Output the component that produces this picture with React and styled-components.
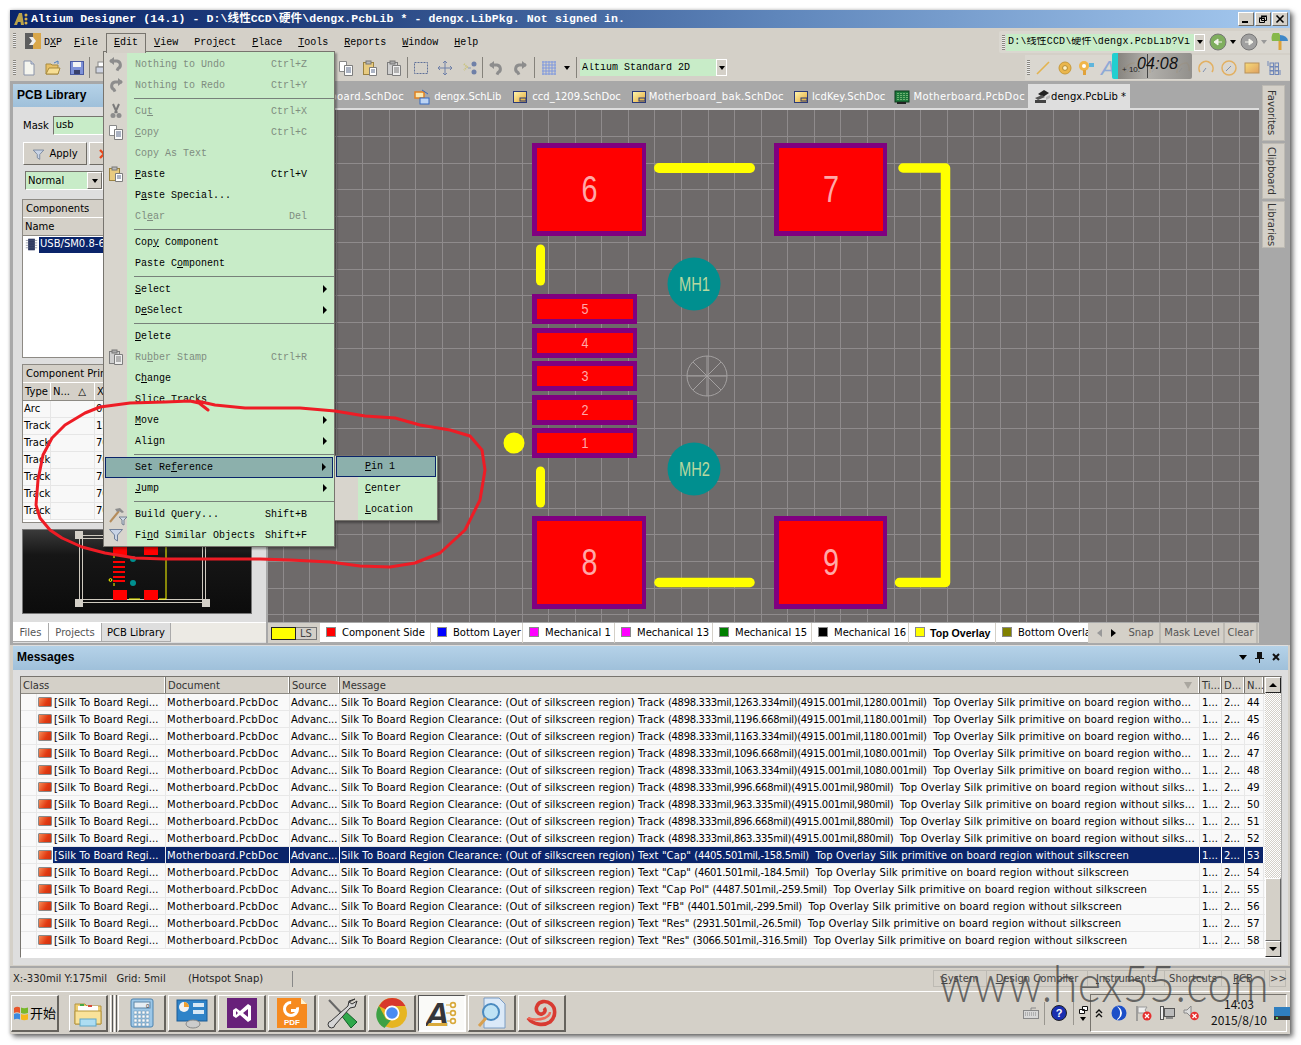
import React from 'react';
import styled, { createGlobalStyle, css } from 'styled-components';

const ui = '"DejaVu Sans", Tahoma, sans-serif';
const mono = '"Liberation Mono", "Noto Sans CJK SC", monospace';
const headFont = '"Liberation Sans", Tahoma, sans-serif';

const Global = createGlobalStyle`
  html, body { margin: 0; padding: 0; background: #fff; }
  * { box-sizing: border-box; }
`;

const raised = css`
  border-style: solid; border-width: 1px;
  border-color: #fff #6f6c66 #6f6c66 #fff;
`;
const sunken = css`
  border-style: solid; border-width: 1px;
  border-color: #77746e #fff #fff #77746e;
`;

const Window = styled.div`
  position: relative; width: 1280px; height: 1024px; margin: 10px;
  display: flex; flex-direction: column; background: #d4d0c8;
  box-shadow: 3px 3px 5px rgba(0,0,0,.55), 0 0 3px rgba(0,0,0,.25);
  font: 10px/1.2 ${ui}; color: #000; overflow: visible;
`;
const TitleBar = styled.div`
  height: 18px; flex: none; display: flex; align-items: center; padding: 0 2px 0 3px;
  background: linear-gradient(90deg, #0a246a 0%, #24427f 25%, #5f86bb 60%, #a6caf0 100%);
`;
const TitleText = styled.div`
  flex: 1; margin-left: 1px; color: #fff; font: bold 11.5px/18px ${mono}; white-space: pre; letter-spacing: .12px;
`;
const WinBtn = styled.div`
  width: 16px; height: 14px; margin-left: 1px; background: #d4d0c8; ${raised};
  display: flex; align-items: center; justify-content: center;
`;
const MenuRow = styled.div`
  height: 24px; flex: none; display: flex; align-items: center; padding-left: 3px;
`;
const Grip = styled.div`
  width: 3px; height: ${p => p.$h || 15}px; flex: none; margin-right: ${p => p.$mr ?? 1}px;
  background: repeating-linear-gradient(#8a8780 0 1px, #ececec 1px 2px);
`;
const MenuItem = styled.div`
  font: 10px/19px ${mono}; padding: 0 ${p => p.$pr ?? 8}px 0 ${p => p.$pl ?? 8}px; height: 19px; margin-top: 5px;
  white-space: pre; position: relative;
  ${p => p.$open && css`
    border: 1px solid #77746e; border-bottom: 0; padding: 0 7px; line-height: 18px; z-index: 6; height: 20px; background: #d4d0c8;
  `}
`;
const DxpMark = styled.div`margin-left: 3px; display: flex; margin-top: 1px;`;
const MenuSpacer = styled.div`flex: 1;`;
const RightBar = styled.div`
  display: flex; align-items: center; height: 22px; width: 291px; padding-left: 3px; background: #dad7d0; border-radius: 2px 0 0 2px; margin-top: 4px;
`;
const Combo = styled.div`
  display: flex; align-items: center; height: ${p => p.$h || 17}px; width: ${p => p.$w}px; flex: none;
  background: #c8ecc8; font: 10px/1 ${mono}; padding-left: 2px; white-space: pre; overflow: hidden; margin-left: ${p => p.$ml || 0}px;
`;
const ComboText = styled.span`flex: 1; overflow: hidden; letter-spacing: ${p => p.$ls || 0}px;`;
const ComboBtn = styled.div`
  width: 11px; align-self: stretch; flex: none; background: #d4d0c8; border: 1px solid #fff;
  display: flex; align-items: center; justify-content: center;
`;
const Caret = styled.i`
  display: block; width: 0; height: 0; border: ${p => p.$s || 3}px solid transparent; border-top: ${p => (p.$s || 3) + 1}px solid ${p => p.$c || '#000'}; border-bottom: 0;
`;
const CaretBox = styled.div`width: ${p => p.$w || 12}px; height: 16px; flex: none; display: flex; align-items: center; justify-content: center;`;
const ToolRow = styled.div`
  height: 29px; flex: none; display: flex; align-items: center; padding: 2px 0 0 3px;
`;
const ToolBtn = styled.div`
  width: ${p => p.$w || 24}px; height: 22px; flex: none; display: flex; align-items: center; justify-content: center; margin-left: ${p => p.$ml || 0}px;
`;
const ToolSep = styled.div`
  width: 1px; height: 21px; flex: none; background: #85827b; margin: 0 ${p => p.$m ?? 1}px;
`;
const HiddenGap = styled.div`width: ${p => p.$w}px; flex: none;`;
const RightTools = styled.div`
  margin-left: auto; width: 265px; height: 25px; display: flex; align-items: center; padding-left: 2px; background: #dad7d0;
`;
const StringGlyph = styled.span`font: italic 21px/1 ${headFont}; color: #8ea9d6;`;

const Main = styled.div`
  height: 564px; flex: none; display: flex; background: #a8a8a8; padding: 3px 0 0 3px;
`;
const LeftPanel = styled.div`
  width: 253px; height: 559px; flex: none; display: flex; flex-direction: column; background: #dedede;
`;
const PanelHead = styled.div`
  height: 23px; flex: none; background: linear-gradient(#b5d2e8, #9fc0da);
  font: bold 12px/23px ${headFont}; padding-left: 4px; color: #000;
`;
const MaskRow = styled.div`
  display: flex; align-items: center; gap: 4px; margin: 9px 0 0 10px; height: 19px; padding-top: 1px;
`;
const GreenInput = styled.div`
  flex: 1; margin: -1px 13px 0 0; height: 19px; background: #c8ecc8; ${sunken}; padding: 2px 2px; font-size: 10px;
`;
const ApplyRow = styled.div`display: flex; gap: 2px; margin: 7px 0 0 10px; height: 23px;`;
const PushBtn = styled.div`
  width: ${p => p.$w}px; background: #d4d0c8; ${raised};
  display: flex; align-items: center; justify-content: center; gap: 4px; padding-top: 1px;
`;
const NormalCombo = styled.div`
  display: flex; width: 78px; height: 19px; margin: 6px 0 0 12px; background: #c8ecc8; ${sunken}; align-items: center; padding-left: 2px; justify-content: space-between;
`;
const ListBtn = styled.div`
  width: 15px; height: 17px; background: #d4d0c8; ${raised}; display: flex; align-items: center; justify-content: center;
`;
const Box = styled.div`
  margin: ${p => p.$mt}px 14px 0 9px; height: ${p => p.$h}px; background: #fff; border: 1px solid #8d8a84; flex: none; overflow: hidden;
`;
const BoxTitle = styled.div`
  height: 18px; background: #d4d0c8; padding: 3px 3px 0; border-bottom: 1px solid #fff; white-space: nowrap;
`;
const BoxHead = styled.div`
  height: 18px; display: flex; background: #d4d0c8; border-bottom: 1px solid #8d8a84; line-height: 18px;
`;
const HeadCell = styled.div`
  width: ${p => p.$w}px; flex: none; padding-left: 2px; border-right: 1px solid #fff; white-space: nowrap; overflow: hidden;
  display: flex; justify-content: space-between; padding-right: 8px;
`;
const CompRow = styled.div`display: flex; align-items: center; height: 17px; padding-left: 2px; gap: 1px;`;
const SelText = styled.div`background: #0a246a; color: #fff; padding: 1px 1px; flex: 1; white-space: nowrap; overflow: hidden; height: 16px;`;
const PrimRow = styled.div`
  display: flex; height: 17px; background: #f8f8f8; border-bottom: 1px solid #e6e6e6; line-height: 16px;
`;
const PrimCell = styled.div`width: ${p => p.$w}px; flex: none; padding-left: 1px; border-right: 1px solid #e6e6e6; white-space: nowrap;`;
const Preview = styled.div`
  margin: 6px 14px 0 9px; height: 85px; flex: none; border: 1px solid #777;
  background: linear-gradient(#3a3a3a, #161616 30%, #0c0c0c); line-height: 0;
`;
const BottomTabs = styled.div`
  margin-top: 8px; display: flex; height: 20px; flex: none; background: #eceae4; border-top: 1px solid #fff;
`;
const BottomTab = styled.div`
  width: ${p => p.$w}px; text-align: center; line-height: 20px; flex: none;
  color: ${p => p.$on ? '#000' : '#555'}; background: ${p => p.$on ? '#dedede' : '#fff'};
  border-right: 1px solid #aaa; border-bottom: 1px solid #aaa;
`;

const DocArea = styled.div`
  width: 991px; flex: none; margin-left: 2px; display: flex; flex-direction: column; height: 559px;
`;
const DocTabs = styled.div`
  height: 24px; flex: none; display: flex; align-items: stretch; padding-left: 25px; white-space: nowrap;
`;
const DocTab = styled.div`
  display: flex; align-items: center; gap: ${p => p.$gap ?? 4}px; padding: 1px ${p => p.$pr ?? 11}px 0 ${p => p.$pl ?? 0}px; font-size: 10px;
  color: ${p => p.$on ? '#000' : '#fff'}; background: ${p => p.$on ? '#dedede' : 'transparent'};
  flex: none; letter-spacing: ${p => p.$ls || 0}px;
`;
const DocStrip = styled.div`height: 2px; flex: none; background: #dedede;`;
const CanvasWrap = styled.div`height: 512px; flex: none; line-height: 0; background: #6e6a6a;`;
const LayerBar = styled.div`
  height: 21px; flex: none; margin-top: 1px; display: flex; background: #d4d0c8; padding-left: 3px; border-bottom: 1px solid #aaa;
`;
const Swatch = styled.div`
  width: 25px; height: 13px; background: #ff0; border: 1px solid #222; margin-top: 4px; flex: none;
`;
const LS = styled.div`
  width: 21px; height: 13px; margin-top: 4px; border: 1px solid #777; border-left: 0; background: #d4d0c8; flex: none; text-align: center; line-height: 12px; color: #444; margin-right: 3px;
`;
const LayerTab = styled.div`
  width: ${p => p.$w}px; flex: none; background: #fff; margin-right: 1px; display: flex; align-items: center; padding: 1px 0 0 6px; gap: ${p => p.$b ? 5 : 6}px; white-space: nowrap; overflow: hidden;
  border-bottom: 1px solid #aaa;
  ${p => p.$b && css`font: bold 10.6px/1 ${headFont};`}
`;
const LayerDot = styled.i`
  display: block; width: 10px; height: 10px; flex: none; background: ${p => p.$c}; border: 1px solid #8a8a8a; margin-top: -3px;
`;
const LayerArrows = styled.div`
  width: 34px; flex: none; display: flex; align-items: center; justify-content: space-around; padding: 0 3px; margin-right: 0;
`;
const LayerBtn = styled.div`
  width: ${p => p.$w}px; flex: none; text-align: center; line-height: 20px; color: #555; border-right: 2px solid #bdbab3;
`;
const Dock = styled.div`
  width: 28px; flex: none; display: flex; flex-direction: column; gap: 2px; padding: 1px 0 0 3px; margin-right: 0;
`;
const DockTab = styled.div`
  width: 23px; height: ${p => p.$h}px; writing-mode: vertical-rl; background: #d4d0c8; border: 1px solid #bdbab3; text-align: center; line-height: 25px; color: #333;
`;

const Messages = styled.div`
  height: 320px; flex: none; display: flex; flex-direction: column; background: #dedede; margin: 0 2px 0 3px; 
`;
const MsgHead = styled.div`
  height: 24px; flex: none; display: flex; align-items: center; padding: 0 8px 2px 4px; margin-top: 1px;
  background: linear-gradient(#b5d2e8, #9fc0da); font: bold 12px/1 ${headFont};
`;
const MsgTitle = styled.div`flex: 1;`;
const MsgIcons = styled.div`display: flex; align-items: center; gap: 8px;`;
const MsgBody = styled.div`
  display: flex; margin: 6px 6px 0 7px; height: 282px; border: 1px solid #77746e; border-right-color: #aaa; border-bottom-color: #fff; background: #fff;
`;
const MsgTable = styled.div`flex: 1; min-width: 0;`;
const cols = '16px 129px 124px 50px 860px 22px 23px 19px';
const MsgHeader = styled.div`
  display: grid; grid-template-columns: 145px 124px 50px 860px 22px 23px 19px; height: 17px; background: #d4d0c8; border-bottom: 1px solid #8d8a84; line-height: 18px;
`;
const MsgHCell = styled.div`
  padding-left: 2px; border-right: 1px solid #77746e; box-shadow: inset -1px 0 0 #fff; color: #333; white-space: nowrap; overflow: hidden; position: relative;
`;
const FilterMark = styled.i`
  position: absolute; right: 7px; top: 5px; width: 0; height: 0; border: 4px solid transparent; border-top: 7px solid #a9a69f; border-bottom: 0;
`;
const MsgRow = styled.div`
  display: grid; grid-template-columns: ${cols}; height: 17px; border-bottom: 1px solid #e8e8e8; background: #f9f9f9;
  line-height: 18px;
`;
const MsgCell = styled.div`
  padding-left: ${p => p.$pl ?? 1}px; white-space: pre; overflow: hidden; border-right: 1px solid #e8e8e8; letter-spacing: ${p => p.$ls || 0}px;
  ${p => p.$sel && css`background: #0a246a; color: #fff; border-right-color: #fff;`}
`;
const IconCell = styled.div`
  display: flex; align-items: center; padding-left: 1px; gap: 1px; white-space: pre; overflow: hidden; border-right: 1px solid #e8e8e8;
`;
const ClassText = styled.span`
  flex: 1; padding-left: 1px; line-height: 18px; height: 16px; overflow: hidden; letter-spacing: .1px;
  ${p => p.$sel && css`background: #0a246a; color: #fff;`}
`;
const Wide = styled.span`letter-spacing: .1px;`;
const Coord = styled.span`letter-spacing: -.31px;`;
const Tail = styled.span`letter-spacing: .16px;`;
const RedIcon = styled.i`
  display: block; width: 14px; height: 10px; flex: none; background: linear-gradient(120deg, #f58a55, #e23a12 60%, #cc3210); border: 1px solid #888; border-radius: 1px;
`;
const Scroll = styled.div`
  width: 16px; flex: none; display: flex; flex-direction: column;
  background: repeating-conic-gradient(#d4d0c8 0 25%, #fff 0 50%) 0 0 / 2px 2px;
`;
const ScrollBtn = styled.div`
  width: 16px; height: 16px; flex: none; background: #d4d0c8; border: 1px solid; border-color: #fff #222 #222 #fff; display: flex; align-items: center; justify-content: center;
`;
const ScrollThumb = styled.div`
  width: 16px; height: 63px; margin-top: auto; background: #d4d0c8; border: 1px solid; border-color: #fff #666 #666 #fff;
`;
const ArrowUp = styled.i`display: block; width: 0; height: 0; border: 4px solid transparent; border-bottom: 4px solid #000; border-top: 0;`;
const ArrowDown = styled.i`display: block; width: 0; height: 0; border: 4px solid transparent; border-top: 4px solid #000; border-bottom: 0;`;

const StatusBar = styled.div`
  height: 26px; flex: none; display: flex; align-items: center; padding: 0 0 2px 3px; margin-top: 1px; border-top: 2px solid #a8a8a8; white-space: pre; color: #222; border-bottom: 1px solid #fff;
`;
const StatusText = styled.div`width: 280px; height: 16px; line-height: 16px; border-right: 1px solid #888; flex: none;`;
const StatusTabs = styled.div`display: flex; margin-left: auto; margin-right: 5px; height: 17px;`;
const StatusTab = styled.div`
  width: ${p => p.$w}px; flex: none; text-align: center; line-height: 16px; color: #444; border: 1px solid #bdbab3; margin-left: ${p => p.$ml || 0}px; margin-right: -1px;
`;
const Taskbar = styled.div`
  height: 42px; flex: none; display: flex; align-items: center; padding: 0 3px 0 1px; 
`;
const TaskBtn = styled.div`
  width: ${p => p.$w || 48}px; height: 37px; flex: none; margin-right: ${p => p.$mr ?? 2}px; display: flex; align-items: center; justify-content: center;
  background: ${p => p.$on ? '#fafaf8' : '#d4d0c8'}; gap: 1px;
  border-style: solid; border-width: 1px 2px 2px 1px;
  border-color: ${p => p.$on ? '#555 #fff #fff #555' : '#fff #66635d #66635d #fff'};
  font: 13px/1 "Noto Sans CJK SC", sans-serif;
`;
const TaskGrip = styled.div`
  width: 3px; height: 37px; flex: none; margin-right: 1px; background: #d4d0c8; border-right: 1px solid #555; border-left: 1px solid #fff;
`;
const TaskLeftGap = styled.div`width: 10px; flex: none;`;
const TrayLeft = styled.div`
  margin-left: auto; display: flex; align-items: center; height: 37px; flex: none;
`;
const TrayPlain = styled.div`width: ${p => p.$w}px; height: 37px; display: flex; flex-direction: column; align-items: center; justify-content: center; flex: none; gap: 3px;`;
const TraySep = styled.div`width: 1px; height: 23px; flex: none; background: #fff; border-left: 1px solid #99968f; margin: 0 2px;`;
const Tray = styled.div`
  width: 197px; height: 38px; flex: none; display: flex; align-items: center; border: 1px solid; border-color: #77746e #fff #fff #77746e; padding-left: 0;
`;
const TrayIcon = styled.div`width: ${p => p.$w || 24}px; height: 20px; flex: none; display: flex; align-items: center; justify-content: center; margin-left: ${p => p.$ml || 0}px;`;
const Clock = styled.div`
  width: 58px; flex: none; text-align: center; font: 12px/16px "Noto Sans CJK SC", "Liberation Sans", sans-serif; color: #111; margin: -2px 0 0 7px;
`;

/* overlays */
const EditMenu = styled.div`
  position: absolute; left: 93px; top: 41px; width: 232px; height: 496px; background: #c8ecc8; border: 1px solid #77746e; z-index: 5;
  padding-top: 2px; box-shadow: 2px 2px 2px rgba(0,0,0,.35);
  &:before { content: ""; position: absolute; left: 0; top: 0; bottom: 0; width: 23px; background: #d8d5cd; }
`;
const MenuLine = styled.div`
  position: relative; height: 21px; display: flex; align-items: center; font: 10px/1 ${mono}; white-space: pre;
  padding-left: ${p => p.$sub ? 30 : 31}px; color: ${p => p.$dis ? '#7f8d80' : '#000'};
  ${p => p.$sel && css`background: #8cb0ac; outline: 1px solid #0a246a; outline-offset: -1px; margin: 0 1px; padding-left: ${p.$sub ? 29 : 30}px;`}
  ${p => p.$sub && p.$sel && css`margin-bottom: 1px;`}
`;
const LineIcon = styled.div`position: absolute; left: 4px; top: 2px; width: 16px; height: 16px;`;
const Shortcut = styled.span`position: absolute; right: 27px;`;
const SubArrow = styled.i`
  position: absolute; right: 7px; top: 6px; width: 0; height: 0; border: 4px solid transparent; border-left: 4px solid #000; border-right: 0;
`;
const MenuSep = styled.div`height: 5px; margin-left: 30px; position: relative; &:after { content: ""; position: absolute; left: 0; right: 0; top: 2px; height: 1px; background: #77817a; }`;
const SubMenu = styled.div`
  position: absolute; left: 324px; top: 445px; width: 104px; height: 66px; background: #c8ecc8; border: 1px solid #77746e; z-index: 6; box-shadow: 2px 2px 2px rgba(0,0,0,.35);
  &:before { content: ""; position: absolute; left: 0; top: 0; bottom: 0; width: 23px; background: #d8d5cd; }
`;
const Overlay = styled.svg`position: absolute; left: -10px; top: -10px; z-index: 8; pointer-events: none;`;
const ClockWidget = styled.div`
  position: absolute; left: 1102px; top: 43px; width: 80px; height: 26px; border-radius: 2px; z-index: 4; display: flex; align-items: center;
  background: linear-gradient(90deg, #22cfd0 0 6px, rgba(128,125,120,.92) 6px, rgba(172,170,166,.86) 45%, rgba(140,138,134,.92));
  &:after { content: ""; position: absolute; left: 35px; top: 1px; bottom: 1px; width: 1px; background: #444; }
`;
const ClockSmall = styled.span`margin-left: 10px; font: 8px/1 ${headFont}; color: #222; margin-top: 8px; white-space: pre;`;
const ClockTime = styled.span`font: italic 16px/1 ${headFont}; color: #111; letter-spacing: .2px; margin: -4px 0 0 -3px; position: relative; z-index: 1;`;
const Watermark = styled.div`
  position: absolute; left: 929px; top: 947px; z-index: 9; font: 300 51px/1 Lato, "Liberation Sans", sans-serif; color: rgba(70,70,70,.78); white-space: nowrap; letter-spacing: .55px; pointer-events: none;
  transform: scaleX(.875); transform-origin: left top;
`;
const AltiumA = styled.text`font: italic 700 34px ${headFont};`;

const L = ({ t }) => {
  const i = t.indexOf('&');
  if (i < 0) return t;
  return <>{t.slice(0, i)}<u>{t[i + 1]}</u>{t.slice(i + 2)}</>;
};

/* icons */
const S = ({ s = 16, vb = 16, children }) => <svg width={s} height={s} viewBox={`0 0 ${vb} ${vb}`}>{children}</svg>;
const DocI = ({ c = '#f5f5ee' }) => <S><path d="M3 1h7l3 3v11H3z" fill={c} stroke="#8a93a8" /><path d="M10 1v3h3" fill="#cbd6ea" stroke="#8a93a8" /></S>;
const FolderI = () => <S><path d="M1 4h5l1 1h6v9H1z" fill="#e8c066" stroke="#a78a3e" /><path d="M4 8h11l-2 6H1z" fill="#f7de94" stroke="#a78a3e" /><path d="M9 3l4-2v3" fill="none" stroke="#4d7fc0" /></S>;
const SaveI = () => <S><rect x="1.5" y="1.5" width="13" height="13" fill="#7f92d8" stroke="#4b5aa0" /><rect x="4" y="2" width="8" height="5" fill="#f4f4f4" /><rect x="5" y="10" width="6" height="4" fill="#39406a" /></S>;
const PrintI = () => <S><rect x="4" y="2" width="8" height="5" fill="#fff" stroke="#888" /><rect x="2" y="7" width="12" height="6" fill="#cfd4e2" stroke="#777" /></S>;
const CopyI = () => <S><path d="M1.5 1.5h7v10h-7z" fill="#fff" stroke="#888" /><path d="M6.5 5.5h8v10h-8z" fill="#fbfbfb" stroke="#7d7d7d" /><path d="M8 8h5M8 10h5M8 12h5" stroke="#5a6b8a" /></S>;
const PasteI = () => <S><rect x="1.5" y="2.5" width="10" height="12" fill="#e8cb80" stroke="#9b8240" /><rect x="4" y="1" width="5" height="3" fill="#bbb" stroke="#777" /><path d="M7.5 7.5h7v8h-7z" fill="#fff" stroke="#7d7d7d" /><path d="M9 10h4M9 12h4" stroke="#5a6b8a" /></S>;
const StampI = () => <S><rect x="1.5" y="2.5" width="10" height="12" fill="#cfcfcf" stroke="#7d7d7d" /><rect x="4" y="1" width="5" height="3" fill="#aaa" stroke="#777" /><path d="M6.5 5.5h8v10h-8z" fill="#eee" stroke="#7d7d7d" /><path d="M8 8h5M8 10h5M8 12h5" stroke="#777" /></S>;
const SelRectI = () => <S><rect x="1.5" y="2.5" width="13" height="11" fill="none" stroke="#5f7098" strokeDasharray="2 1" /></S>;
const MoveI = () => <S><path d="M8 1v14M1 8h14M6 3l2-2 2 2M6 13l2 2 2-2M3 6L1 8l2 2M13 6l2 2-2 2" fill="none" stroke="#6f80a8" /></S>;
const SelLineI = () => <S><path d="M3 4l3 3-3 3" fill="none" stroke="#c9c27a" strokeWidth="2" strokeDasharray="1 1" /><path d="M7 8h3" stroke="#8a9ab8" /><circle cx="13" cy="4" r="2.5" fill="#6f80a8" /><circle cx="13" cy="12" r="2.5" fill="#6f80a8" /></S>;
const UndoI = ({ flip }) => <S><g transform={flip ? 'translate(16,0) scale(-1,1)' : ''}><path d="M2 5h7a4 4 0 0 1 1 7.6l-1 2" fill="none" stroke="#8d8d8d" strokeWidth="3" /><path d="M6 1v8L1 5z" fill="#8d8d8d" /></g></S>;
const GridI = () => <S>{[2, 5, 8, 11, 14].map(v => <g key={v}><path d={`M${v} 1v14`} stroke="#7e98de" /><path d={`M1 ${v}h14`} stroke="#7e98de" /></g>)}</S>;
const ScissorI = () => <S><path d="M5 1l4 9M11 1L7 10" stroke="#7b7b7b" strokeWidth="2" /><circle cx="5" cy="12.5" r="2.5" fill="#8d8d8d" /><circle cx="11" cy="12.5" r="2.5" fill="#8d8d8d" /></S>;
const FunnelI = ({ s = 16, c = '#c9d4e6', e = '#6f7f98' }) => <S s={s}><path d="M1.5 2.5h13L9.5 8v6l-3-2V8z" fill={c} stroke={e} /></S>;
const HammerI = () => <svg width="20" height="20" viewBox="0 0 20 20"><path d="M2 16L11 5" stroke="#b58c5a" strokeWidth="2" /><path d="M7 3l5-1 4 4-2 1-3-2-2 1z" fill="#8d8d8d" /><path d="M11 11h8l-3 3v5l-2-1v-4z" fill="#cfd8e6" stroke="#77818f" /></svg>;
const LineI = () => <S><path d="M2 14L14 2" stroke="#e3b34f" strokeWidth="1.6" /></S>;
const PadI = () => <S><circle cx="8" cy="8" r="6" fill="#eab64c" stroke="#c79a3a" /><circle cx="8" cy="8" r="2.4" fill="#fff2c8" stroke="#b18a32" /></S>;
const ViaI = () => <S><circle cx="6" cy="6" r="5" fill="#f0b64a" /><circle cx="6" cy="6" r="2" fill="#fff" /><rect x="5" y="10" width="3" height="5" fill="#e0a23a" /><rect x="11" y="3" width="5" height="4" fill="#5fb5dc" /></S>;
const ArcI = ({ d = 'M3 13A9 9 0 0 1 13 3' }) => <S><path d={d} fill="none" stroke="#e2b062" strokeWidth="1.6" /><path d="M8 8l-3 4" stroke="#7d8fb0" /></S>;
const CircI = () => <S><circle cx="8" cy="8" r="7" fill="none" stroke="#e2b062" strokeWidth="1.5" /><path d="M5 11l5-5" stroke="#7d8fb0" /></S>;
const FillI = () => <S><rect x="1" y="3" width="14" height="10" fill="url(#fillg)" stroke="#b8925a" /><defs><linearGradient id="fillg" x2="1" y2="1"><stop offset="0" stopColor="#f6dc7a" /><stop offset="1" stopColor="#e0a060" /></linearGradient></defs></S>;
const ArrayI = () => <S>{[[5, 5], [10, 5], [5, 9], [10, 9], [5, 13], [10, 13]].map(([x, y]) => <rect key={x + '-' + y} x={x - 1} y={y - 2} width="3.5" height="3.5" fill="none" stroke="#7087b8" />)}<path d="M2 1v5M14 10v5" stroke="#7087b8" /></S>;
const NavI = ({ c, rev }) => <svg width="18" height="18" viewBox="0 0 18 18"><circle cx="9" cy="9" r="8" fill={c} stroke="#777" /><path d={rev ? 'M5 9h4V6l4 3-4 3V9' : 'M13 9H9V6L5 9l4 3V9'} fill="#f4f4ec" stroke="#f4f4ec" /></svg>;
const GlobeI = () => <svg width="18" height="18" viewBox="0 0 18 18"><path d="M1 8a8 6 0 0 1 16 0z" fill="#3f88c8" /><path d="M1 8a4 6 0 0 1 8-6v6z" fill="#86b84a" /><rect x="7.5" y="8" width="3" height="9" fill="#dba33b" /></svg>;
const DxpI = () => <svg width="16" height="16" viewBox="0 0 16 16"><rect x="0" y="0" width="8" height="16" fill="#5d5d5d" /><rect x="8" y="0" width="8" height="16" fill="#d9a74a" /><path d="M4 4h4l3 4-3 4H4l3-4z" fill="#eee" /></svg>;
const SchI = () => <S><rect x="1.5" y="2.5" width="13" height="11" fill="url(#schg)" stroke="#2b3a78" /><rect x="8" y="9" width="6" height="3" fill="#e8b84a" stroke="#2b3a78" /><defs><linearGradient id="schg" x2="1" y2="1"><stop offset="0" stopColor="#fff6b0" /><stop offset="1" stopColor="#e3a838" /></linearGradient></defs></S>;
const LibI = () => <S><rect x="1" y="3" width="9" height="6" fill="#fbe9b0" stroke="#e08020" strokeWidth="1.5" /><rect x="6" y="9" width="9" height="6" fill="#bcd4f4" stroke="#3468c0" /><path d="M8 1l6 4" stroke="#3468c0" /></S>;
const PcbI = () => <S><rect x="1" y="2" width="14" height="11" fill="#1f7a3c" stroke="#0d3b1c" />{[4, 7, 10, 13].map(x => <path key={x} d={`M${x} 4v7`} stroke="#bfe8a8" strokeDasharray="1 1" />)}<rect x="3" y="13" width="9" height="2" fill="#222" /></S>;
const PcbLibI = () => <svg width="17" height="17" viewBox="0 0 17 17"><path d="M4 6l6-4 5 3-6 4z" fill="#222" /><path d="M1 10l7-3 3 2-7 3z" fill="#555" /><rect x="1" y="12" width="11" height="3" fill="#444" /><path d="M12 9l4-2v3l-4 2z" fill="#b7b7b7" /></svg>;
const ChipI = () => <S s={13}><rect x="4" y="1" width="8" height="14" fill="#2e3a60" />{[3, 6, 9, 12].map(y => <path key={y} d={`M1 ${y}h14`} stroke="#8a8f9e" />)}<rect x="4" y="1" width="8" height="14" fill="#2e3a60" opacity=".8" /></S>;

const T = 32;
const TFolder = () => <S s={T} vb={32}><path d="M3 7h10l2 2h14v18H3z" fill="#efcf72" stroke="#b5953f" /><rect x="6" y="9" width="20" height="6" fill="#fff" /><rect x="8" y="7" width="4" height="2" fill="#45a845" /><rect x="16" y="8" width="4" height="2" fill="#d84a3a" /><path d="M3 14h26v13H3z" fill="#f9e29a" stroke="#b5953f" /><rect x="8" y="22" width="16" height="7" fill="#aeddf2" stroke="#5ea6c8" /></S>;
const TCalc = () => <S s={T} vb={32}><rect x="5" y="2" width="22" height="28" rx="2" fill="#9cc7e8" stroke="#4c82ae" /><rect x="8" y="5" width="16" height="6" fill="#e6eef5" stroke="#5d85a5" /><text x="20" y="10.5" fontSize="6" fontFamily="Liberation Sans" fill="#333">0</text>{[14, 18, 22, 26].map(y => [8, 12, 16, 20].map(x => <rect key={x + '-' + y} x={x} y={y} width="3" height="3" fill="#fdfdfd" stroke="#6a8eaa" strokeWidth=".5" />))}</S>;
const TPanel = () => <S s={T} vb={32}><rect x="1" y="3" width="30" height="21" fill="#2f83c8" stroke="#1c5b94" /><circle cx="8" cy="10" r="5" fill="#f3f3f3" /><path d="M8 10V5a5 5 0 0 1 5 5z" fill="#f0a030" /><rect x="17" y="6" width="11" height="4" fill="#d8e8f5" /><rect x="17" y="13" width="11" height="4" fill="#d8e8f5" /><ellipse cx="17" cy="27" rx="7" ry="4" fill="#ccc" stroke="#888" /></S>;
const TVs = () => <S s={T} vb={32}><rect x="1" y="1" width="30" height="30" fill="#68217a" /><path d="M22 7l-8 7-4-3-3 2v6l3 2 4-3 8 7 3-2V9zM22 12v8l-5-4zM10 14l2 2-2 2z" fill="#fff" fillRule="evenodd" /></S>;
const TPdf = () => <S s={T} vb={32}><path d="M1 1h24l6 6v24H1z" fill="#f68a1f" /><path d="M25 1v6h6z" fill="#fff2d0" /><circle cx="15" cy="12" r="6.5" fill="none" stroke="#fff" strokeWidth="3" strokeDasharray="30 8" /><path d="M15 12h6l-1 3h-5z" fill="#fff" /><text x="16" y="28" textAnchor="middle" fontSize="8" fontWeight="700" fontFamily="Liberation Sans" fill="#fff">PDF</text></S>;
const TTools = () => <S s={T} vb={32}><path d="M3 3l16 17" stroke="#666" strokeWidth="2" /><path d="M15 18l4-4 12 11-6 6z" fill="#2fa84a" stroke="#14602a" /><path d="M29 2l-6 2-1 5-17 15a3.5 3.5 0 1 0 4 4l15-17 5-1 2-6-5 3-3-2z" fill="#d6d6d6" stroke="#333" /></S>;
const TChrome = () => <S s={T} vb={32}><circle cx="16" cy="16" r="15" fill="#e6b521" /><path d="M3 9A15 15 0 0 1 29.5 9H16a7 7 0 0 0-6 3.5z" fill="#d8382c" /><path d="M3 9l7 13 0 0a7 7 0 0 0 5 1l-6.5 8A15 15 0 0 1 3 9z" fill="#3da144" /><circle cx="16" cy="16" r="7.5" fill="#fff" /><circle cx="16" cy="16" r="5.8" fill="#4b8bf0" /></S>;
const TAltium = () => <S s={T} vb={32}><AltiumA x="-1" y="29" fill="#35353a">A</AltiumA><path d="M1 29h20l.4-3H3z" fill="#d8a93a" /><g fill="#fff" stroke="#d8a93a" strokeWidth="1.6"><circle cx="27" cy="8" r="2.4" /><circle cx="27" cy="16" r="2.4" /><circle cx="27" cy="24" r="2.4" /></g><path d="M20 8h5M20 16h5M21 24h4" stroke="#d8a93a" /></S>;
const TFind = () => <S s={T} vb={32}><path d="M8 1h15l6 6v24H8z" fill="#dbe9f8" stroke="#7b9cc4" /><circle cx="15" cy="15" r="8" fill="#bfe3f5" stroke="#4a8ac0" strokeWidth="2" /><path d="M10 21l-7 8" stroke="#d8a050" strokeWidth="3" /></S>;
const TSnail = () => <S s={T} vb={32}><path d="M2 21c5 7 16 8 22 4 6-5 6-14 1-18-5-4-12-3-14 2-2 4 1 9 5 8 3-1 4-4 2-6" fill="none" stroke="#d83a32" strokeWidth="3.6" /><path d="M2 21c5 2 11 2 17 0 4-2 5-4 5-6" stroke="#ee6a5a" strokeWidth="2.4" fill="none" /></S>;
const Win = () => <svg width="16" height="16" viewBox="0 0 16 16"><path d="M1 3q3-2 6-.5V8Q4 6.5 1 8z" fill="#e8562a" /><path d="M8 2.5q3 1.5 7 0V8q-4 1.5-7 0z" fill="#78b82a" /><path d="M1 9q3-1.500 6 0v5.500q-3-1.500-6 0z" fill="#3a8ae0" /><path d="M8 9q3 1.500 7 0v5.500q-4 1.500-7 0z" fill="#f6b81a" /></svg>;

const menu = [
  { t: 'Nothing to Undo', s: 'Ctrl+Z', d: 1, i: <UndoI /> },
  { t: 'Nothing to Redo', s: 'Ctrl+Y', d: 1, i: <UndoI flip /> },
  0,
  { t: 'Cu&t', s: 'Ctrl+X', d: 1, i: <ScissorI /> },
  { t: '&Copy', s: 'Ctrl+C', d: 1, i: <CopyI /> },
  { t: 'Copy As Text', d: 1 },
  { t: '&Paste', s: 'Ctrl+V', i: <PasteI /> },
  { t: 'P&aste Special...' },
  { t: 'Cl&ear', s: 'Del', d: 1 },
  0,
  { t: 'Cop&y Component' },
  { t: 'Paste C&omponent' },
  0,
  { t: '&Select', a: 1 },
  { t: 'D&eSelect', a: 1 },
  0,
  { t: '&Delete' },
  { t: 'Ru&bber Stamp', s: 'Ctrl+R', d: 1, i: <StampI /> },
  { t: 'C&hange' },
  { t: 'Slice Tracks' },
  { t: '&Move', a: 1 },
  { t: 'Ali&gn', a: 1 },
  0,
  { t: 'Set Re&ference', a: 1, sel: 1 },
  { t: '&Jump', a: 1 },
  0,
  { t: 'Build Query...', s: 'Shift+B', i: <HammerI /> },
  { t: 'Fi&nd Similar Objects', s: 'Shift+F', i: <FunnelI /> },
];

const base = 'Silk To Board Region Clearance: (Out of silkscreen region) ';
const tailA = '  Top Overlay Silk primitive on board region witho...';
const tailB = '  Top Overlay Silk primitive on board region without silks...';
const tailC = '  Top Overlay Silk primitive on board region without silkscreen';
const track = (a, b) => `(4898.333mil,${a}mil)(4915.001mil,${b}mil)`;
const msgs = [
  ['Track ', track('1263.334', '1280.001'), tailA],
  ['Track ', track('1196.668', '1180.001'), tailA],
  ['Track ', track('1163.334', '1180.001'), tailA],
  ['Track ', track('1096.668', '1080.001'), tailA],
  ['Track ', track('1063.334', '1080.001'), tailA],
  ['Track ', track('996.668', '980'), tailB],
  ['Track ', track('963.335', '980'), tailB],
  ['Track ', track('896.668', '880'), tailB],
  ['Track ', track('863.335', '880'), tailB],
  ['Text "Cap" ', '(4405.501mil,-158.5mil)', tailC],
  ['Text "Cap" ', '(4601.501mil,-184.5mil)', tailC],
  ['Text "Cap Pol" ', '(4487.501mil,-259.5mil)', tailC],
  ['Text "FB" ', '(4401.501mil,-299.5mil)', tailC],
  ['Text "Res" ', '(2931.501mil,-26.5mil)', tailC],
  ['Text "Res" ', '(3066.501mil,-316.5mil)', tailC],
];

const range = (a, b, s) => { const o = []; for (let v = a; v <= b; v += s) o.push(Math.round(v) + .5); return o; };
const vLines = range(521.7 - 26.56 * 9, 1259, 26.56);
const hLines = range(136 - 26.56, 622, 26.56);

const Pad = ({ x, y, w, h, n, big }) => (
  <g>
    <rect x={x} y={y} width={w} height={h} fill="#800080" />
    <rect x={x + 5} y={y + 5} width={w - 9} height={h - 10} fill="#f00" />
    <text x={x + (w + 1) / 2} y={y + h / 2 + (big ? 12 : 5)} textAnchor="middle" fontFamily="Liberation Sans" fontSize={big ? 36 : 14} fill="#ffa8a8"
      textLength={big ? 16 : 7} lengthAdjust="spacingAndGlyphs">{n}</text>
  </g>
);
const Hole = ({ cy, n }) => (
  <g>
    <circle cx="694" cy={cy} r="26.5" fill="#008f8f" />
    <text x="694.5" y={cy + 7} textAnchor="middle" fontFamily="Liberation Sans" fontSize="19.5" fill="#b8d8a0" textLength="31" lengthAdjust="spacingAndGlyphs">{n}</text>
  </g>
);
const Board = () => (
  <svg width="991" height="512" viewBox="268 110 991 512">
    <rect x="268" y="110" width="991" height="512" fill="#6e6a6a" />
    <g stroke="#8f8b8c" strokeWidth="1" shapeRendering="crispEdges">
      {vLines.map(x => <line key={'v' + x} x1={x} x2={x} y1="110" y2="622" />)}
      {hLines.map(y => <line key={'h' + y} y1={y} y2={y} x1="268" x2="1259" />)}
    </g>
    <Pad x={532} y={143} w={114} h={93} n="6" big />
    <Pad x={774} y={143} w={113} h={93} n="7" big />
    <Pad x={532} y={516} w={114} h={93} n="8" big />
    <Pad x={774} y={516} w={113} h={93} n="9" big />
    <Pad x={532} y={294} w={105} h={30} n="5" />
    <Pad x={532} y={328} w={105} h={30} n="4" />
    <Pad x={532} y={361} w={105} h={30} n="3" />
    <Pad x={532} y={395} w={105} h={30} n="2" />
    <Pad x={532} y={428} w={105} h={30} n="1" />
    <g stroke="#ff0" fill="none" strokeLinecap="round" strokeLinejoin="round">
      <path d="M659 168H750" strokeWidth="10" />
      <path d="M540.5 249V281" strokeWidth="9" />
      <path d="M540.5 471V503" strokeWidth="9" />
      <path d="M903 168H945.5V582.5H899.5" strokeWidth="9.5" />
      <path d="M659 582.5H750" strokeWidth="9.5" />
    </g>
    <circle cx="514" cy="443" r="10.5" fill="#ff0" />
    <Hole cy={284} n="MH1" />
    <Hole cy={469} n="MH2" />
    <g stroke="#a3a0a0" fill="none">
      <circle cx="707" cy="376" r="20" />
      <path d="M693 362L721 390M721 362L693 390M707 356V396M687 376H727" />
    </g>
  </svg>
);
const Mini = () => (
  <svg width="230" height="83" viewBox="22 531 230 83">
    <g fill="none" stroke="#cfcabf">
      <rect x="78.5" y="536.5" width="126" height="67" />
      <rect x="81.5" y="539.5" width="120" height="61" />
    </g>
    {[[74, 600], [201, 600]].map(([x, y]) => <rect key={x} x={x} y={y} width="8" height="8" fill="#d4d0c8" />)}
    <rect x="74" y="532" width="8" height="8" fill="#d4d0c8" /><rect x="201" y="532" width="8" height="8" fill="#d4d0c8" />
    {[591, 546].map(y => [112, 143].map(x => <rect key={x + '-' + y} x={x} y={y} width="14" height="10" fill="#f00" />))}
    {[562, 567, 572, 577, 581].map(y => <rect key={y} x="112" y={y} width="12" height="2" fill="#f00" />)}
    <circle cx="132" cy="560" r="3" fill="#008f8f" /><circle cx="132" cy="584" r="3" fill="#008f8f" />
    <circle cx="109.5" cy="581" r="1.4" fill="none" stroke="#ff0" />
    <path d="M113 556v3M113 584v3M128 600h11M158 600h7V547" stroke="#ff0" fill="none" />
  </svg>
);

export default function App() {
  return (
    <Window>
      <Global />
      <TitleBar>
        <svg width="17" height="14" viewBox="0 0 17 14"><path d="M1 13L6 1h3l2 12H8l-.5-3H5l-1 3z" fill="#b9a24a" /><circle cx="13" cy="3" r="1.5" fill="#d8b24a" /><circle cx="13" cy="7" r="1.5" fill="#d8b24a" /><circle cx="13" cy="11" r="1.5" fill="#d8b24a" /></svg>
        <TitleText>{'Altium Designer (14.1) - D:\\线性CCD\\硬件\\dengx.PcbLib * - dengx.LibPkg. Not signed in.'}</TitleText>
        <WinBtn><svg width="10" height="10"><rect x="1" y="7" width="6" height="2" /></svg></WinBtn>
        <WinBtn><svg width="10" height="10"><path d="M3.5 2.5h5v4h-5zM1.5 4.5h5v4h-5z" fill="#d4d0c8" stroke="#000" /><path d="M3 2h6M1 4h6" stroke="#000" /></svg></WinBtn>
        <WinBtn><svg width="10" height="10"><path d="M1.5 1.5l7 7M8.5 1.5l-7 7" stroke="#000" strokeWidth="1.6" /></svg></WinBtn>
      </TitleBar>

      <MenuRow>
        <Grip $h={15} $mr={6} />
        <DxpMark><DxpI /></DxpMark>
        <MenuItem $pl={3} $pr={4}><L t="D&XP" /></MenuItem>
        <MenuItem><L t="&File" /></MenuItem>
        <MenuItem $open><L t="&Edit" /></MenuItem>
        <MenuItem><L t="&View" /></MenuItem>
        <MenuItem><L t="Pro&ject" /></MenuItem>
        <MenuItem><L t="&Place" /></MenuItem>
        <MenuItem><L t="&Tools" /></MenuItem>
        <MenuItem><L t="&Reports" /></MenuItem>
        <MenuItem><L t="&Window" /></MenuItem>
        <MenuItem><L t="&Help" /></MenuItem>
        <MenuSpacer />
        <RightBar>
          <Grip $h={15} $mr={1} />
          <Combo $w={199}>
            <ComboText $ls={.15}>{'D:\\线性CCD\\硬件\\dengx.PcbLib?Vi'}</ComboText>
            <ComboBtn><Caret /></ComboBtn>
          </Combo>
          <ToolBtn $w={23} $ml={1}><NavI c="#7fae5e" /></ToolBtn>
          <CaretBox $w={8}><Caret /></CaretBox>
          <ToolBtn $w={23}><NavI c="#a0a0a0" rev /></ToolBtn>
          <CaretBox $w={8}><Caret $c="#999" /></CaretBox>
          <ToolBtn $w={23}><GlobeI /></ToolBtn>
        </RightBar>
      </MenuRow>

      <ToolRow>
        <Grip $h={15} />
        <ToolBtn><DocI /></ToolBtn>
        <ToolBtn><FolderI /></ToolBtn>
        <ToolBtn><SaveI /></ToolBtn>
        <ToolSep $m={0} />
        <ToolBtn><PrintI /></ToolBtn>
        <HiddenGap $w={220} />
        <ToolBtn><CopyI /></ToolBtn>
        <ToolBtn><PasteI /></ToolBtn>
        <ToolBtn><StampI /></ToolBtn>
        <ToolSep />
        <ToolBtn><SelRectI /></ToolBtn>
        <ToolBtn><MoveI /></ToolBtn>
        <ToolBtn><SelLineI /></ToolBtn>
        <ToolSep />
        <ToolBtn><UndoI /></ToolBtn>
        <ToolBtn><UndoI flip /></ToolBtn>
        <ToolSep $m={2} />
        <ToolBtn><GridI /></ToolBtn>
        <CaretBox><Caret /></CaretBox>
        <ToolSep $m={3} />
        <Combo $w={147} $h={17}>
          <ComboText>Altium Standard 2D</ComboText>
          <ComboBtn><Caret /></ComboBtn>
        </Combo>
        <RightTools>
          <Grip $h={15} $mr={2} />
          <ToolBtn $w={22}><LineI /></ToolBtn>
          <ToolBtn $w={21}><PadI /></ToolBtn>
          <ToolBtn $w={22}><ViaI /></ToolBtn>
          <ToolBtn $w={22}><StringGlyph>A</StringGlyph></ToolBtn>
          <ToolBtn $w={22}><ArcI /></ToolBtn>
          <ToolBtn $w={28}><ArcI /></ToolBtn>
          <ToolBtn $w={25}><ArcI d="M3 13A9 9 0 0 1 13 3A9 9 0 0 1 15 11" /></ToolBtn>
          <ToolBtn $w={23}><ArcI d="M2 12A7 7 0 1 1 14 12" /></ToolBtn>
          <ToolBtn $w={23}><CircI /></ToolBtn>
          <ToolBtn $w={23}><FillI /></ToolBtn>
          <ToolBtn $w={22}><ArrayI /></ToolBtn>
        </RightTools>
      </ToolRow>

      <Main>
        <LeftPanel>
          <PanelHead>PCB Library</PanelHead>
          <MaskRow>Mask<GreenInput>usb</GreenInput></MaskRow>
          <ApplyRow>
            <PushBtn $w={64}><FunnelI s={13} />Apply</PushBtn>
            <PushBtn $w={60}><svg width="12" height="12"><path d="M2 2l8 8M10 2l-8 8" stroke="#e8481c" strokeWidth="2.4" /></svg>Clear</PushBtn>
          </ApplyRow>
          <NormalCombo>Normal<ListBtn><Caret /></ListBtn></NormalCombo>
          <Box $mt={9} $h={159}>
            <BoxTitle>Components</BoxTitle>
            <BoxHead><HeadCell $w={229}>Name</HeadCell></BoxHead>
            <CompRow><ChipI /><SelText>USB/SM0.8-6</SelText></CompRow>
          </Box>
          <Box $mt={6} $h={159}>
            <BoxTitle>Component Primitives</BoxTitle>
            <BoxHead>
              <HeadCell $w={28}>Type</HeadCell>
              <HeadCell $w={44}>N...<span>△</span></HeadCell>
              <HeadCell $w={40}>X</HeadCell>
            </BoxHead>
            {[['Arc', '0mil'], ['Track', '130mil'], ['Track', '70mil'], ['Track', '70mil'], ['Track', '70mil'], ['Track', '70mil'], ['Track', '70mil']].map(([a, b], i) => (
              <PrimRow key={i}><PrimCell $w={28}>{a}</PrimCell><PrimCell $w={44} /><PrimCell $w={60}>{b}</PrimCell></PrimRow>
            ))}
          </Box>
          <Preview><Mini /></Preview>
          <BottomTabs>
            <BottomTab $w={36}>Files</BottomTab>
            <BottomTab $w={53}>Projects</BottomTab>
            <BottomTab $w={69} $on>PCB Library</BottomTab>
          </BottomTabs>
        </LeftPanel>

        <DocArea>
          <DocTabs>
            <DocTab $pr={10} $ls={.35}>Motherboard.SchDoc</DocTab>
            <DocTab><LibI />dengx.SchLib</DocTab>
            <DocTab $pr={10}><SchI />ccd_1209.SchDoc</DocTab>
            <DocTab $gap={2} $pr={9} $ls={.32}><SchI />Motherboard_bak.SchDoc</DocTab>
            <DocTab $gap={3} $pr={8} $ls={.12}><SchI />lcdKey.SchDoc</DocTab>
            <DocTab $pr={3} $ls={.39}><PcbI />Motherboard.PcbDoc</DocTab>
            <DocTab $on $pl={6} $pr={4} $gap={0}><PcbLibI />dengx.PcbLib *</DocTab>
          </DocTabs>
          <DocStrip />
          <CanvasWrap><Board /></CanvasWrap>
          <LayerBar>
            <Swatch /><LS>LS</LS>
            <LayerTab $w={110}><LayerDot $c="#f00" />Component Side</LayerTab>
            <LayerTab $w={91}><LayerDot $c="#00f" />Bottom Layer</LayerTab>
            <LayerTab $w={91}><LayerDot $c="#f0f" />Mechanical 1</LayerTab>
            <LayerTab $w={97}><LayerDot $c="#f0f" />Mechanical 13</LayerTab>
            <LayerTab $w={98}><LayerDot $c="#008000" />Mechanical 15</LayerTab>
            <LayerTab $w={96}><LayerDot $c="#000" />Mechanical 16</LayerTab>
            <LayerTab $w={86} $b><LayerDot $c="#ff0" />Top Overlay</LayerTab>
            <LayerTab $w={92}><LayerDot $c="#808000" />Bottom Overlay</LayerTab>
            <LayerArrows>
              <svg width="5" height="8"><path d="M5 0v8L0 4z" fill="#999" /></svg>
              <svg width="5" height="8"><path d="M0 0v8l5-4z" fill="#000" /></svg>
            </LayerArrows>
            <LayerBtn $w={38}>Snap</LayerBtn>
            <LayerBtn $w={64}>Mask Level</LayerBtn>
            <LayerBtn $w={33}>Clear</LayerBtn>
          </LayerBar>
        </DocArea>
        <Dock>
          <DockTab $h={56}>Favorites</DockTab>
          <DockTab $h={56}>Clipboard</DockTab>
          <DockTab $h={47}>Libraries</DockTab>
        </Dock>
      </Main>

      <Messages>
        <MsgHead>
          <MsgTitle>Messages</MsgTitle>
          <MsgIcons>
            <Caret $s={4} />
            <svg width="9" height="11"><path d="M2 0h5v6h2v1H5v4H4V7H0V6h2z" fill="#111" /></svg>
            <svg width="8" height="8"><path d="M1 1l6 6M7 1L1 7" stroke="#111" strokeWidth="2" /></svg>
          </MsgIcons>
        </MsgHead>
        <MsgBody>
          <MsgTable>
            <MsgHeader>
              <MsgHCell>Class</MsgHCell>
              <MsgHCell>Document</MsgHCell>
              <MsgHCell>Source</MsgHCell>
              <MsgHCell>Message<FilterMark /></MsgHCell>
              <MsgHCell>Ti...</MsgHCell>
              <MsgHCell>D...</MsgHCell>
              <MsgHCell>N...</MsgHCell>
            </MsgHeader>
            {msgs.map(([kind, coord, tail], i) => {
              const sel = i === 9;
              return (
                <MsgRow key={i}>
                  <MsgCell />
                  <IconCell><RedIcon /><ClassText $sel={sel}>[Silk To Board Regi...</ClassText></IconCell>
                  <MsgCell $sel={sel} $ls={.39}>Motherboard.PcbDoc</MsgCell>
                  <MsgCell $sel={sel}>Advanc...</MsgCell>
                  <MsgCell $sel={sel}><Wide>{base}{kind}</Wide><Coord>{coord}</Coord><Tail>{tail}</Tail></MsgCell>
                  <MsgCell $sel={sel} $pl={2}>1...</MsgCell>
                  <MsgCell $sel={sel} $pl={2}>2...</MsgCell>
                  <MsgCell $sel={sel} $pl={2}>{44 + i}</MsgCell>
                </MsgRow>
              );
            })}
          </MsgTable>
          <Scroll>
            <ScrollBtn><ArrowUp /></ScrollBtn>
            <ScrollThumb />
            <ScrollBtn><ArrowDown /></ScrollBtn>
          </Scroll>
        </MsgBody>
      </Messages>

      <StatusBar>
        <StatusText>{'X:-330mil Y:175mil   Grid: 5mil       (Hotspot Snap)'}</StatusText>
        <StatusTabs>
          <StatusTab $w={54}><L t="&System" /></StatusTab>
          <StatusTab $w={102}><L t="&Design Compiler" /></StatusTab>
          <StatusTab $w={78}><L t="&Instruments" /></StatusTab>
          <StatusTab $w={58}>Shortcuts</StatusTab>
          <StatusTab $w={44}><L t="&PCB" /></StatusTab>
          <StatusTab $w={17} $ml={5}>&gt;&gt;</StatusTab>
        </StatusTabs>
      </StatusBar>

      <Taskbar>
        <TaskBtn $mr={0}><Win />开始</TaskBtn>
        <TaskLeftGap />
        <TaskBtn $w={39} $mr={2}><TFolder /></TaskBtn>
        <TaskGrip /><TaskGrip />
        <TaskBtn><TCalc /></TaskBtn>
        <TaskBtn><TPanel /></TaskBtn>
        <TaskBtn><TVs /></TaskBtn>
        <TaskBtn><TPdf /></TaskBtn>
        <TaskBtn><TTools /></TaskBtn>
        <TaskBtn><TChrome /></TaskBtn>
        <TaskBtn $on><TAltium /></TaskBtn>
        <TaskBtn><TFind /></TaskBtn>
        <TaskBtn><TSnail /></TaskBtn>
        <TrayLeft>
          <TrayPlain $w={22}><svg width="16" height="12" viewBox="0 0 16 12"><rect x=".5" y="3.5" width="15" height="8" fill="#d8d8d8" stroke="#888" /><path d="M2 6h12M2 8h12" stroke="#888" strokeDasharray="1 1" /><path d="M8 3V1h5" fill="none" stroke="#888" /></svg></TrayPlain>
          <TraySep />
          <TrayPlain $w={24}><svg width="16" height="16" viewBox="0 0 16 16"><circle cx="8" cy="8" r="7.5" fill="#1a2fb0" stroke="#222" /><text x="8" y="12" textAnchor="middle" fontSize="11" fontWeight="700" fontFamily="Liberation Sans" fill="#fff">?</text></svg></TrayPlain>
          <TraySep />
          <TrayPlain $w={14}><svg width="9" height="8" viewBox="0 0 9 8"><path d="M3.5 .5h5v4h-5zM.5 3.5h5v4h-5z" fill="#fff" stroke="#111" /></svg><Caret /></TrayPlain>
          <Tray>
            <TrayIcon $w={16}><svg width="8" height="9"><path d="M1 4l3-3 3 3M1 8l3-3 3 3" fill="none" stroke="#111" strokeWidth="1.4" /></svg></TrayIcon>
            <TrayIcon><svg width="16" height="16" viewBox="0 0 16 16"><circle cx="8" cy="8" r="7.5" fill="#1c4fc8" /><path d="M5 1a8 8 0 0 1 0 14a8 8 0 0 0 6-7a8 8 0 0 0-6-7z" fill="#fff" /></svg></TrayIcon>
            <TrayIcon><svg width="17" height="16" viewBox="0 0 17 16"><path d="M2 1v15" stroke="#888" strokeWidth="1.4" /><path d="M3 2h9l-2 3 2 3H3z" fill="#eee" stroke="#999" /><circle cx="12" cy="11" r="4.5" fill="#e63030" /><path d="M10 9l4 4M14 9l-4 4" stroke="#fff" strokeWidth="1.3" /></svg></TrayIcon>
            <TrayIcon><svg width="16" height="16" viewBox="0 0 16 16"><rect x="5.5" y="3.5" width="10" height="8" fill="#bbb" stroke="#555" /><rect x="1.5" y="1.5" width="3" height="13" fill="#eee" stroke="#555" /><rect x="7" y="12" width="7" height="2" fill="#888" /></svg></TrayIcon>
            <TrayIcon><svg width="16" height="16" viewBox="0 0 16 16"><path d="M1 5h3l4-4v11L4 8H1z" fill="#ddd" stroke="#888" /><circle cx="11.5" cy="11" r="4.3" fill="#e63030" /><path d="M9.5 9l4 4M13.5 9l-4 4" stroke="#fff" strokeWidth="1.3" /></svg></TrayIcon>
            <Clock>14:03<br />2015/8/10</Clock>
            <TrayIcon $ml={2}><svg width="16" height="13" viewBox="0 0 16 13"><rect width="16" height="13" fill="#2f7fc0" /><rect y="9" width="16" height="4" fill="#333" /><rect x="2" y="10" width="2" height="2" fill="#6c6" /></svg></TrayIcon>
          </Tray>
        </TrayLeft>
      </Taskbar>

      <EditMenu>
        {menu.map((m, i) => m === 0 ? <MenuSep key={i} /> : (
          <MenuLine key={i} $dis={m.d} $sel={m.sel}>
            {m.i && <LineIcon>{m.i}</LineIcon>}
            <L t={m.t} />
            {m.s && <Shortcut>{m.s}</Shortcut>}
            {m.a && <SubArrow />}
          </MenuLine>
        ))}
      </EditMenu>
      <SubMenu>
        <MenuLine $sel $sub><L t="&Pin 1" /></MenuLine>
        <MenuLine $sub><L t="&Center" /></MenuLine>
        <MenuLine $sub><L t="&Location" /></MenuLine>
      </SubMenu>
      <ClockWidget>
        <ClockSmall>+ 10.</ClockSmall>
        <ClockTime>04:08</ClockTime>
      </ClockWidget>
      <Overlay width="1301" height="1045" viewBox="0 0 1301 1045">
        <path d="M208 410L199 403L190 401L165 402L130 403L100 407L85 413L65 425L52 438L43 455L38 480L36 505L40 518L50 530L62 538L82 547L105 553L135 558L165 559L260 559L290 560L330 562L360 566L390 567L415 563L440 553L465 530L480 500L485 470L482 450L470 436L450 430L420 425L395 418L365 416L335 411L300 408L245 408L215 405L197 401" fill="none" stroke="#ee1c25" strokeWidth="3" strokeLinejoin="round" strokeLinecap="round" />
      </Overlay>
      <Watermark>www.hex55.com</Watermark>
    </Window>
  );
}
